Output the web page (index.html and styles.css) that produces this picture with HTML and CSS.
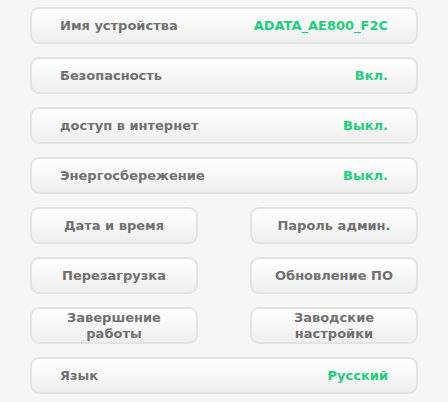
FILE: index.html
```
<!DOCTYPE html>
<html>
<head>
<meta charset="utf-8">
<link rel="stylesheet" href="styles.css">
</head>
<body>
<div class="menu">
  <div class="btn wide"><span class="label">Имя устройства</span><span class="value">ADATA_AE800_F2C</span></div>
  <div class="btn wide"><span class="label">Безопасность</span><span class="value">Вкл.</span></div>
  <div class="btn wide"><span class="label">доступ в интернет</span><span class="value">Выкл.</span></div>
  <div class="btn wide"><span class="label">Энергосбережение</span><span class="value">Выкл.</span></div>
  <div class="pair">
    <div class="btn small">Дата и время</div>
    <div class="btn small">Пароль админ.</div>
  </div>
  <div class="pair">
    <div class="btn small">Перезагрузка</div>
    <div class="btn small">Обновление ПО</div>
  </div>
  <div class="pair">
    <div class="btn small">Завершение<br>работы</div>
    <div class="btn small">Заводские<br>настройки</div>
  </div>
  <div class="btn wide"><span class="label">Язык</span><span class="value">Русский</span></div>
</div>
</body>
</html>
```
FILE: styles.css
```
html, body {
  margin: 0;
  padding: 0;
  background: #f6f6f6;
}
body {
  font-family: "DejaVu Sans", Verdana, sans-serif;
  font-weight: bold;
  font-size: 13px;
  color: #707070;
}
.menu {
  display: flex;
  flex-direction: column;
  gap: 13px;
  padding: 7px 30px 0 30px;
  width: 388px;
}
.btn {
  box-sizing: border-box;
  height: 37px;
  border: 2px solid #e3e3e3;
  border-radius: 9px;
  background: linear-gradient(#ffffff, #efefef);
  display: flex;
  align-items: center;
}
.wide {
  justify-content: space-between;
  padding: 0 28px;
}
.value {
  color: #20d07a;
}
.pair {
  display: flex;
  justify-content: space-between;
}
.small {
  width: 168px;
  justify-content: center;
  text-align: center;
  line-height: 16px;
}
```
